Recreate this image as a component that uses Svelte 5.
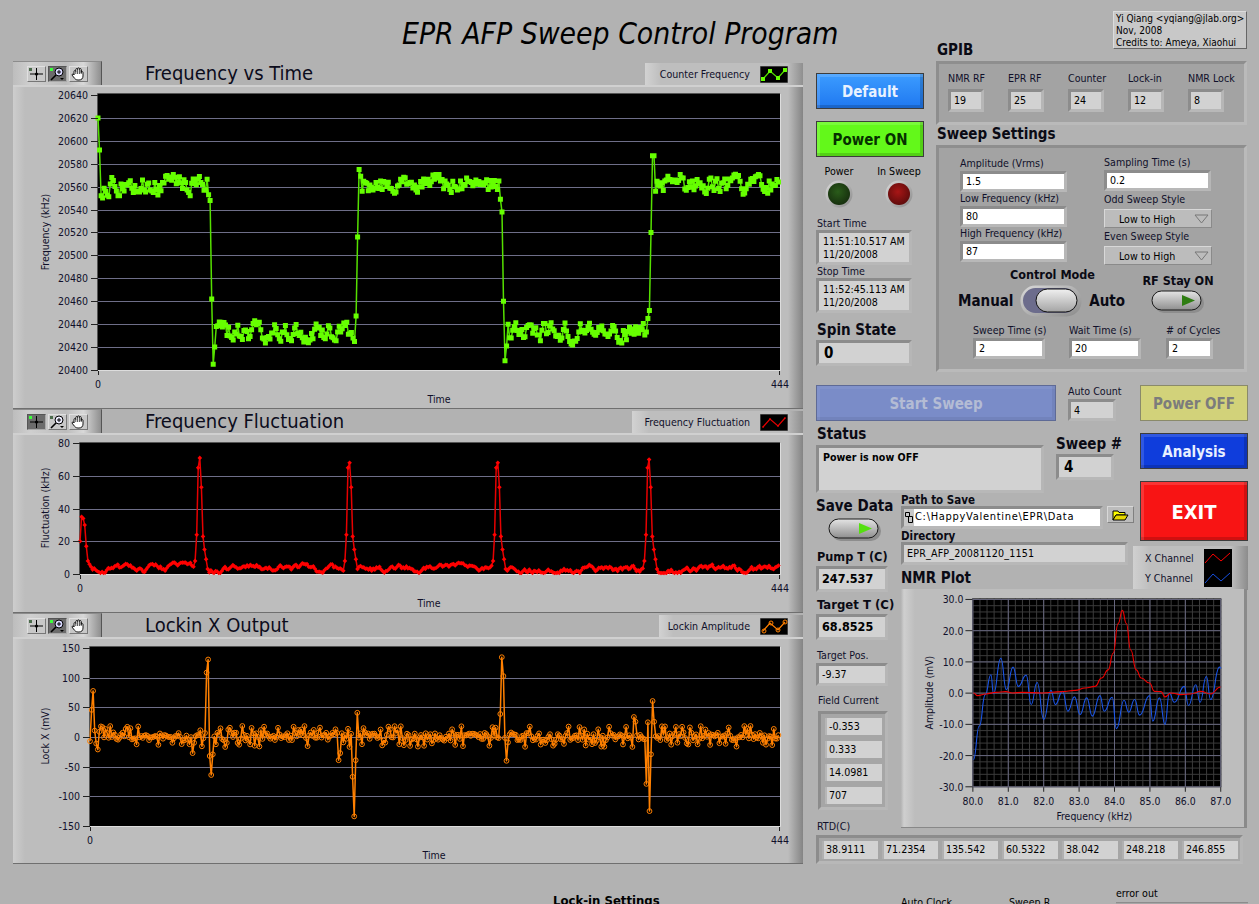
<script>
	// seeded noise so the traces look the same on every load
	let seed = 20081120;
	function rnd() {
		seed = (seed + 0x6d2b79f5) | 0;
		let t = Math.imul(seed ^ (seed >>> 15), 1 | seed);
		t = (t + Math.imul(t ^ (t >>> 7), 61 | t)) ^ t;
		return ((t ^ (t >>> 14)) >>> 0) / 4294967296;
	}

	const N = 444;

	function makeFreq() {
		const over = {
			0: 20620, 1: 20592, 2: 20552, 3: 20550, 72: 20553, 73: 20548, 74: 20462, 75: 20405, 76: 20420, 77: 20438,
			168: 20447, 169: 20516, 170: 20575, 171: 20569, 172: 20556, 262: 20549, 263: 20538, 264: 20460, 265: 20408,
			266: 20421, 267: 20440, 358: 20445, 359: 20452, 360: 20520, 361: 20587, 362: 20587, 363: 20556
		};
		const out = [];
		let walk = 0;
		for (let i = 0; i < N; i++) {
			const high = i < 74 || (i >= 170 && i < 264) || i >= 361;
			walk = walk * 0.5 + (rnd() - 0.5) * 14;
			out.push(over[i] ?? (high ? 20562 : 20434) + walk);
		}
		return out;
	}

	function makeFluct() {
		const peak = [8, 24, 65, 68, 53, 23, 15, 9, 3];
		const over = { 0: 20, 1: 35, 2: 34, 3: 30, 4: 17, 5: 8, 6: 6 };
		[73, 168, 262, 358].forEach((start, n) => {
			peak.forEach((v, k) => (over[start + k] = k === 3 ? v + (n === 0 ? 3 : n === 3 ? 2 : 0) : v));
		});
		const out = [];
		let walk = 3;
		for (let i = 0; i < N; i++) {
			walk = Math.max(0.6, Math.min(7, walk * 0.88 + 0.3 + (rnd() - 0.5) * 3));
			out.push(over[i] ?? walk);
		}
		return out;
	}

	function makeLockin() {
		const over = {
			0: -8, 1: 45, 2: 77, 3: 10, 4: -12, 5: -22, 6: 8, 7: 17, 66: -28, 75: 108, 76: 130, 77: -33, 78: -65, 79: -30,
			160: -40, 161: -28, 169: -68, 170: -135, 171: -40, 172: 40, 264: 38, 265: 134, 266: 102, 268: -41, 269: -10,
			350: 33, 351: 25, 358: -80, 359: 24, 360: -126, 361: -30, 362: 60, 363: 25
		};
		const out = [];
		for (let i = 0; i < N; i++) {
			let v = (rnd() - 0.5) * 14;
			if (rnd() < 0.3) v = (rnd() < 0.55 ? 1 : -1) * (10 + rnd() * 8);
			out.push(over[i] ?? v);
		}
		return out;
	}

	function toXY(values, plot, yOf) {
		return values.map((v, i) => [plot.x + (i * plot.w) / N, yOf(v)]);
	}

	const linePath = (pts) => pts.map((p, i) => (i ? 'L' : 'M') + p[0].toFixed(1) + ' ' + p[1].toFixed(1)).join('');
	const squares = (pts) => pts.map((p) => `M${(p[0] - 2.5).toFixed(1)} ${(p[1] - 2.5).toFixed(1)}h5v5h-5z`).join('');
	const diamonds = (pts) => pts.map((p) => `M${p[0].toFixed(1)} ${(p[1] - 2.3).toFixed(1)}l2.3 2.3l-2.3 2.3l-2.3 -2.3z`).join('');
	const circles = (pts) => pts.map((p) => `M${(p[0] - 2.4).toFixed(1)} ${p[1].toFixed(1)}a2.4 2.4 0 1 0 4.8 0a2.4 2.4 0 1 0 -4.8 0z`).join('');

	const p1 = { x: 98, y: 94, w: 682, h: 276 };
	const p2 = { x: 80, y: 443, w: 700, h: 131 };
	const p3 = { x: 90, y: 647, w: 690, h: 179 };

	const freqPts = toXY(makeFreq(), p1, (v) => 370 - (v - 20400) * 1.146);
	const fluctPts = toXY(makeFluct(), p2, (v) => 574 - v * 1.635);
	const lockPts = toXY(makeLockin(), p3, (v) => 736.5 - v * 0.592);

	const charts = [
		{
			title: 'Frequency vs Time', legend: 'Counter Frequency', kind: 'c1', active: 1, first: true, vb: '13 85 790 323', plot: p1,
			yLabel: 'Frequency (kHz)', yLabelAt: [49, 232], labelEnd: 88, tickFrom: 91, timeAt: [439, 399], numY: 384,
			ticks: [20640, 20620, 20600, 20580, 20560, 20540, 20520, 20500, 20480, 20460, 20440, 20420, 20400].map((v) => [v, 370 - (v - 20400) * 1.146]),
			grid: [20620, 20600, 20580, 20560, 20540, 20520, 20500, 20480, 20460, 20440, 20420].map((v) => 370 - (v - 20400) * 1.146),
			line: linePath(freqPts), marks: squares(freqPts), lineColor: '#55e000', markColor: '#66ff00', open: false
		},
		{
			title: 'Frequency Fluctuation', legend: 'Frequency Fluctuation', kind: 'c2', active: 0, vb: '13 433 790 179', plot: p2,
			yLabel: 'Fluctuation (kHz)', yLabelAt: [49, 508], labelEnd: 70, tickFrom: 73, timeAt: [429, 603], numY: 588,
			ticks: [80, 60, 40, 20, 0].map((v) => [v, 574 - v * 1.635]),
			grid: [60, 40, 20].map((v) => 574 - v * 1.635),
			line: linePath(fluctPts), marks: diamonds(fluctPts), lineColor: '#e60000', markColor: '#ff0000', open: false
		},
		{
			title: 'Lockin X Output', legend: 'Lockin Amplitude', kind: 'c3', active: 1, vb: '13 637 790 227', plot: p3,
			yLabel: 'Lock X (mV)', yLabelAt: [49, 736], labelEnd: 80, tickFrom: 83, timeAt: [434, 855], numY: 840,
			ticks: [150, 100, 50, 0, -50, -100, -150].map((v) => [v, 737 - v * 0.592]),
			grid: [100, 50, 0, -50, -100].map((v) => 737 - v * 0.592),
			line: linePath(lockPts), marks: circles(lockPts), lineColor: '#ff8000', markColor: '#ff8000', open: true
		}
	];

	// smooth curve through hand-read points of the NMR plot
	function smooth(points) {
		const pts = points.map(([zx, zy]) => [810 + zx / 3, 570 + zy / 3]);
		let d = `M${pts[0][0].toFixed(1)} ${pts[0][1].toFixed(1)}`;
		for (let i = 1; i < pts.length; i++) {
			const mid = ((pts[i - 1][0] + pts[i][0]) / 2).toFixed(1);
			d += `C${mid} ${pts[i - 1][1].toFixed(1)} ${mid} ${pts[i][1].toFixed(1)} ${pts[i][0].toFixed(1)} ${pts[i][1].toFixed(1)}`;
		}
		return d;
	}

	const nmrBlue = smooth([
		[492, 572], [510, 470], [528, 375], [545, 315], [553, 372], [575, 265], [592, 360], [612, 292], [628, 350], [652, 316],
		[667, 405], [685, 338], [705, 450], [727, 362], [740, 405], [762, 365], [778, 425], [798, 382], [815, 435], [835, 385],
		[852, 440], [875, 378], [888, 425], [912, 383], [925, 478], [948, 392], [962, 428], [980, 390], [995, 437], [1025, 378],
		[1035, 455], [1055, 385], [1072, 465], [1085, 370], [1100, 398], [1130, 350], [1143, 408], [1165, 345], [1178, 398],
		[1197, 320], [1210, 390], [1237, 292], [1242, 295]
	]);
	const nmrRed = smooth([
		[492, 370], [505, 378], [530, 373], [560, 368], [590, 366], [610, 370], [640, 368], [700, 370], [760, 366], [800, 362],
		[830, 355], [860, 350], [880, 325], [900, 300], [915, 250], [930, 160], [943, 120], [955, 160], [968, 240], [985, 300],
		[1000, 325], [1025, 340], [1040, 365], [1060, 366], [1072, 382], [1090, 370], [1120, 375], [1150, 373], [1180, 365],
		[1210, 373], [1240, 352]
	]);

	const nmrXs = [80, 81, 82, 83, 84, 85, 86, 87].map((f, i) => [f.toFixed(1), 973.5 + i * 35.72]);
	const nmrYs = [30, 20, 10, 0, -10, -20, -30].map((v, i) => [v.toFixed(1), 599 + i * 31.5]);
	const nmrMinorX = Array.from({ length: 36 }, (_, i) => 973.5 + (i * 35.72) / 5);
	const nmrMinorY = Array.from({ length: 31 }, (_, i) => 599 + (i * 31.5) / 5);

	const gpib = [['NMR RF', 19], ['EPR RF', 25], ['Counter', 24], ['Lock-in', 12], ['NMR Lock', 8]];
	const fieldCurrent = ['-0.353', '0.333', '14.0981', '707'];
	const rtd = ['38.9111', '71.2354', '135.542', '60.5322', '38.042', '248.218', '246.855'];
</script>

{#snippet toolbar(active)}
	<div class="toolbar">
		<div class="tool" class:on={active === 0}>
			<svg width="17" height="14" viewBox="0 0 17 14">
				<rect x="1" y="1" width="3" height="3" fill={active === 0 ? '#3cff3c' : '#4a6a4a'} />
				<path d="M8.5 1v12M2 7h13" stroke="#000" fill="none" />
				<circle cx="8.5" cy="7" r="1.6" fill="#000" />
			</svg>
		</div>
		<div class="tool" class:on={active === 1}>
			<svg width="17" height="14" viewBox="0 0 17 14">
				<rect x="1" y="1" width="3" height="3" fill={active === 1 ? '#3cff3c' : '#4a6a4a'} />
				<circle cx="10" cy="5" r="4" fill={active === 1 ? '#d8d8ff' : '#eef'} stroke="#000" />
				<path d="M8 5h4M10 3v4" stroke="#000" fill="none" />
				<path d="M7 8l-5 5" stroke="#000" stroke-width="1.6" fill="none" />
				<path d="M11 11h4l-2 2z" fill="#000" />
			</svg>
		</div>
		<div class="tool">
			<svg width="17" height="14" viewBox="0 0 17 14">
				<path d="M4 8V4.5a.9.9 0 0 1 1.8 0V2.5a.9.9 0 0 1 1.8 0V1.8a.9.9 0 0 1 1.8 0v.7a.9.9 0 0 1 1.8 0V5.5a.9.9 0 0 1 1.8 0V9c0 2.500-1.500 4-4 4H8C6 13 5 12 3.500 10L2 8a1 1 0 0 1 2 0z" fill="#fff" stroke="#000" stroke-width=".9" />
				<path d="M5.800 4.500V7M7.600 2.500V7M9.400 2.500V7M11.200 3V7" stroke="#000" stroke-width=".7" fill="none" />
			</svg>
		</div>
	</div>
{/snippet}

{#snippet chart(c)}
	<section class="chart {c.kind}">
		<header class="chart-head" class:first={c.first}>
			{@render toolbar(c.active)}
			<h2 class="chart-title">{c.title}</h2>
			<div class="legend {c.kind}-legend">
				<span>{c.legend}</span>
				<svg class="swatch" width="28" height="17" viewBox="0 0 28 17">
					<rect width="28" height="17" fill="#000" stroke="#777" />
					<path d="M3 13L10 5L18 12L25 4" stroke={c.lineColor} stroke-width="1.200" fill="none" />
					{#if c.kind === 'c1'}
						<path d="M1 11h4v4h-4zM8 3h4v4h-4zM16 10h4v4h-4zM23 2h4v4h-4z" fill={c.markColor} />
					{:else if c.kind === 'c2'}
						<path d="M3 12l1 1l-1 1l-1 -1zM10 4l1 1l-1 1l-1 -1zM18 11l1 1l-1 1l-1 -1zM25 3l1 1l-1 1l-1 -1z" fill={c.markColor} />
					{:else}
						<g fill="none" stroke={c.markColor}><circle cx="4" cy="13" r="2" /><circle cx="11" cy="5" r="2" /><circle cx="18" cy="12" r="2" /><circle cx="25" cy="4" r="2" /></g>
					{/if}
				</svg>
			</div>
		</header>
		<div class="chart-body">
			<svg class="plot" viewBox={c.vb}>
				<rect x={c.plot.x} y={c.plot.y} width={c.plot.w} height={c.plot.h} fill="#000" />
				<path d="M{c.plot.x - 0.5} {c.plot.y + c.plot.h}V{c.plot.y - 0.5}H{c.plot.x + c.plot.w}" fill="none" stroke="#555" />
				<path d="M{c.plot.x} {c.plot.y + c.plot.h + 0.5}H{c.plot.x + c.plot.w + 0.5}V{c.plot.y}" fill="none" stroke="#ddd" />
				{#each c.grid as y}
					<line x1={c.plot.x} x2={c.plot.x + c.plot.w} y1={Math.round(y) + 0.5} y2={Math.round(y) + 0.5} stroke="#6e6e88" />
				{/each}
				<path d={c.line} fill="none" stroke={c.lineColor} stroke-width="1.500" stroke-linejoin="round" />
				<path d={c.marks} fill={c.open ? 'none' : c.markColor} stroke={c.open ? c.markColor : 'none'} stroke-width="1" />
				{#each c.ticks as [value, y]}
					<line x1={c.tickFrom} x2={c.plot.x} y1={Math.round(y) + 0.5} y2={Math.round(y) + 0.5} stroke="#222" />
					<text class="tk" x={c.labelEnd} y={y + 4} text-anchor="end">{value}</text>
				{/each}
				<line x1={c.plot.x + 0.5} x2={c.plot.x + 0.5} y1={c.plot.y + c.plot.h + 1} y2={c.plot.y + c.plot.h + 5} stroke="#222" />
				<line x1={c.plot.x + c.plot.w - 0.5} x2={c.plot.x + c.plot.w - 0.5} y1={c.plot.y + c.plot.h + 1} y2={c.plot.y + c.plot.h + 5} stroke="#222" />
				<text class="tk" x={c.plot.x} y={c.numY + 4} text-anchor="middle">0</text>
				<text class="tk" x={c.plot.x + c.plot.w} y={c.numY + 4} text-anchor="middle">444</text>
				<text class="tk" x={c.timeAt[0]} y={c.timeAt[1] + 4} text-anchor="middle">Time</text>
				<text class="tk axis-y" text-anchor="middle" transform="translate({c.yLabelAt[0]} {c.yLabelAt[1]}) rotate(-90)">{c.yLabel}</text>
			</svg>
		</div>
	</section>
{/snippet}

{#snippet pill(color)}
	<svg width="54" height="24" viewBox="0 0 54 24">
		<rect x="3" y="3" width="50" height="20" rx="10" fill="#8d8d8d" />
		<rect x="1" y="1" width="49" height="19" rx="9.500" fill="url(#pillFill)" stroke="#1a1a1a" />
		<path d="M31 5l13 5.500l-13 5.500z" fill={color} />
	</svg>
{/snippet}

<div class="page">
	<svg class="defs" width="0" height="0">
		<defs>
			<linearGradient id="pillFill" x1="0" y1="0" x2="0" y2="1">
				<stop offset="0" stop-color="#e4e4e4" />
				<stop offset="1" stop-color="#8f8f8f" />
			</linearGradient>
			<linearGradient id="knobFill" x1="0" y1="0" x2="0" y2="1">
				<stop offset="0" stop-color="#f0f0f0" />
				<stop offset="1" stop-color="#a4a4a4" />
			</linearGradient>
			<radialGradient id="ledGreen" cx=".45" cy=".4" r=".6">
				<stop offset="0" stop-color="#2a5c1a" />
				<stop offset="1" stop-color="#17300e" />
			</radialGradient>
			<radialGradient id="ledRed" cx=".45" cy=".4" r=".6">
				<stop offset="0" stop-color="#a81616" />
				<stop offset="1" stop-color="#600c0c" />
			</radialGradient>
			<linearGradient id="ledRing" x1="0" y1="0" x2="1" y2="1">
				<stop offset="0" stop-color="#dadada" />
				<stop offset="1" stop-color="#8a8a8a" />
			</linearGradient>
		</defs>
	</svg>

	<div class="left">
		<h1 class="title">EPR AFP Sweep Control Program</h1>
		{#each charts as c}
			{@render chart(c)}
		{/each}
		<div class="lockin-head">Lock-in Settings</div>
	</div>

	<div class="right">
		<div class="upper">
			<div class="col-a">
				<button class="btn blue">Default</button>
				<button class="btn green">Power ON</button>
				<div class="leds">
					<div class="led-item">
						<span>Power</span>
						<svg width="28" height="28" viewBox="0 0 28 28"><circle cx="14" cy="14" r="13.500" fill="url(#ledRing)" /><circle cx="14" cy="14" r="11" fill="url(#ledGreen)" /></svg>
					</div>
					<div class="led-item">
						<span>In Sweep</span>
						<svg width="28" height="28" viewBox="0 0 28 28"><circle cx="14" cy="14" r="13.500" fill="url(#ledRing)" /><circle cx="14" cy="14" r="11" fill="url(#ledRed)" /></svg>
					</div>
				</div>
				<div class="lbl start-lbl">Start Time</div>
				<div class="well time"><div>11:51:10.517 AM</div><div>11/20/2008</div></div>
				<div class="lbl stop-lbl">Stop Time</div>
				<div class="well time"><div>11:52:45.113 AM</div><div>11/20/2008</div></div>
				<h3 class="bold spin-lbl">Spin State</h3>
				<div class="well big spin">0</div>
			</div>

			<div class="col-b">
				<div class="gpib-top">
					<h3 class="bold gpib-h">GPIB</h3>
					<div class="credits">
						<div>Yi Qiang &lt;yqiang@jlab.org&gt;</div>
						<div>Nov, 2008</div>
						<div>Credits to: Ameya, Xiaohui</div>
					</div>
				</div>
				<div class="frame gpib">
					{#each gpib as [name, addr]}
						<div>
							<div class="lbl">{name}</div>
							<div class="well addr">{addr}</div>
						</div>
					{/each}
				</div>
				<h3 class="bold sweep-h">Sweep Settings</h3>
				<div class="frame sweep">
					<div class="sweep-cols">
						<div class="sweep-left">
							<div class="lbl">Amplitude (Vrms)</div>
							<div class="well input wide">1.5</div>
							<div class="lbl gap-a">Low Frequency (kHz)</div>
							<div class="well input wide">80</div>
							<div class="lbl gap-d">High Frequency (kHz)</div>
							<div class="well input wide">87</div>
						</div>
						<div class="sweep-right">
							<div class="lbl">Sampling Time (s)</div>
							<div class="well input wide">0.2</div>
							<div class="lbl gap-b">Odd Sweep Style</div>
							<div class="drop">Low to High<svg width="15" height="10" viewBox="0 0 15 10"><path d="M1 1h13L7.500 9z" fill="none" stroke="#777" /></svg></div>
							<div class="lbl gap-b">Even Sweep Style</div>
							<div class="drop">Low to High<svg width="15" height="10" viewBox="0 0 15 10"><path d="M1 1h13L7.500 9z" fill="none" stroke="#777" /></svg></div>
						</div>
					</div>
					<div class="mode-row">
						<div class="mode">
							<div class="bold small center">Control Mode</div>
							<div class="mode-line">
								<span class="bold">Manual</span>
								<svg width="62" height="32" viewBox="0 0 62 32">
									<rect x=".5" y=".5" width="61" height="31" rx="15" fill="url(#ledRing)" />
									<rect x="3" y="3" width="54" height="25" rx="12.500" fill="#6c6c8c" />
									<rect x="16" y="4" width="41" height="23" rx="11.500" fill="url(#knobFill)" stroke="#111" />
								</svg>
								<span class="bold">Auto</span>
							</div>
						</div>
						<div class="rf">
							<div class="bold small">RF Stay ON</div>
							{@render pill('#2e7d12')}
						</div>
					</div>
					<div class="sweep-bottom">
						<div class="sb1"><div class="lbl">Sweep Time (s)</div><div class="well input">2</div></div>
						<div class="sb2"><div class="lbl">Wait Time (s)</div><div class="well input">20</div></div>
						<div class="sb3"><div class="lbl"># of Cycles</div><div class="well input">2</div></div>
					</div>
				</div>
			</div>
		</div>

		<div class="lower">
			<div class="area-top">
				<div class="top-row">
					<button class="btn start">Start Sweep</button>
					<div class="auto">
						<div class="lbl">Auto Count</div>
						<div class="well auto-w">4</div>
					</div>
				</div>
				<div class="status-row">
					<div class="status">
						<h3 class="bold">Status</h3>
						<div class="well status-w">Power is now OFF</div>
					</div>
					<div class="sweep-n">
						<h3 class="bold">Sweep #</h3>
						<div class="well big sweep-w">4</div>
					</div>
				</div>
			</div>

			<div class="area-side">
				<button class="btn yellow">Power OFF</button>
				<button class="btn navy">Analysis</button>
				<button class="btn red">EXIT</button>
				<div class="channels">
					<div class="ch-names"><span>X Channel</span><span>Y Channel</span></div>
					<svg width="28" height="38" viewBox="0 0 28 38">
						<rect width="28" height="38" fill="#000" />
						<path d="M1 14L9 5L17 12L26 4" stroke="#f00" fill="none" />
						<path d="M1 34L9 25L17 32L26 24" stroke="#1650e0" fill="none" />
					</svg>
				</div>
			</div>

			<div class="area-left">
				<h3 class="bold save-h">Save Data</h3>
				<div class="save-pill">{@render pill('#55e010')}</div>
				<h3 class="bold pump-h">Pump T (C)</h3>
				<div class="well temp">247.537</div>
				<h3 class="bold target-h">Target T (C)</h3>
				<div class="well temp">68.8525</div>
				<div class="lbl pos-l">Target Pos.</div>
				<div class="well pos">-9.37</div>
				<div class="lbl field-l">Field Current</div>
				<div class="well-group field">
					{#each fieldCurrent as v}
						<div class="cell">{v}</div>
					{/each}
				</div>
				<div class="lbl rtd-l">RTD(C)</div>
			</div>

			<div class="area-mid">
				<div class="bold tiny">Path to Save</div>
				<div class="path-row">
					<div class="well path">
						<svg width="10" height="13" viewBox="0 0 10 13"><path d="M1.500 1.500h4v4h-4zM4.500 5.500h4v6h-4z" fill="none" stroke="#000" /></svg>
						<span>C:\HappyValentine\EPR\Data</span>
					</div>
					<div class="folder">
						<svg width="17" height="12" viewBox="0 0 17 12"><path d="M1 2h5l1 1.500h6V6H4L1 11z" fill="#ff0" stroke="#000" /><path d="M1 11l3 -5h12l-3 5z" fill="#e6d800" stroke="#000" /></svg>
					</div>
				</div>
				<div class="bold tiny dir-l">Directory</div>
				<div class="well dir">EPR_AFP_20081120_1151</div>
				<h3 class="bold nmr-h">NMR Plot</h3>
			</div>

			<div class="area-nmr">
				<svg class="plot" viewBox="901 589 346 239">
					<rect x="973" y="598" width="251" height="190" fill="#000" />
					{#each nmrMinorX as x}
						<line x1={x} x2={x} y1="598" y2="788" stroke="#3c3c3c" />
					{/each}
					{#each nmrMinorY as y}
						<line x1="973" x2="1224" y1={y} y2={y} stroke="#3c3c3c" />
					{/each}
					{#each nmrXs as [name, x]}
						<line x1={x} x2={x} y1="598" y2="788" stroke="#66667e" />
						<line x1={x} x2={x} y1="788" y2="793" stroke="#222" />
						<text class="tk" x={x} y="806" text-anchor="middle">{name}</text>
					{/each}
					{#each nmrYs as [name, y]}
						<line x1="973" x2="1224" y1={y} y2={y} stroke="#66667e" />
						<line x1="966" x2="973" y1={y} y2={y} stroke="#222" />
						<text class="tk" x="964" y={y + 4} text-anchor="end">{name}</text>
					{/each}
					<path d={nmrBlue} fill="none" stroke="#1a55e8" stroke-width="1.100" />
					<path d={nmrRed} fill="none" stroke="#f00000" stroke-width="1.100" />
					<text class="tk" x="1096" y="821" text-anchor="middle">Frequency (kHz)</text>
					<text class="tk axis-y" text-anchor="middle" transform="translate(933 693) rotate(-90)">Amplitude (mV)</text>
				</svg>
			</div>
		</div>

		<div class="well-group rtd">
			{#each rtd as v}
				<div class="cell">{v}</div>
			{/each}
		</div>

		<div class="foot">
			<span class="foot-a">Auto Clock</span>
			<span class="foot-b">Sweep R</span>
			<div class="foot-c">
				<span>error out</span>
				<div class="err-box"></div>
			</div>
		</div>
	</div>
</div>

<style>
	:global(body) {
		margin: 0;
		background: #b2b2b2;
	}

	* {
		box-sizing: border-box;
	}

	.page {
		display: flex;
		width: 1259px;
		height: 904px;
		overflow: hidden;
		background: #b2b2b2;
		color: #000;
		font-family: "DejaVu Sans", "Liberation Sans", sans-serif;
		font-stretch: condensed;
		font-size: 10.600px;
		line-height: 12px;
	}

	.defs {
		position: absolute;
	}

	.left {
		width: 790px;
		margin: 0 13px;
		flex: none;
	}

	.title {
		height: 61px;
		margin: 0;
		padding: 15px 0 0 389px;
		font-size: 29.800px;
		line-height: 38px;
		font-weight: 400;
		font-style: italic;
		white-space: nowrap;
		color: #000;
	}

	.chart-head {
		display: flex;
		height: 25px;
		border-top: 1px solid #6f6f6f;
	}

	.chart-head.first {
		height: 24px;
		border-top: 0;
	}

	.toolbar {
		display: flex;
		gap: 2px;
		align-items: center;
		width: 89px;
		padding-left: 14px;
		border-top: 1px solid #8c8c8c;
		border-right: 1px solid #555;
		background: linear-gradient(90deg, #bdbdbd, #cfcfcf 20%, #bcbcbc 60%, #d8d8d8 80%, #8f8f8f);
	}

	.tool {
		display: flex;
		align-items: center;
		justify-content: center;
		width: 19px;
		height: 16px;
		border: 1px solid #888;
		border-color: #e0e0e0 #777 #777 #e0e0e0;
		background: #c8c8c8;
	}

	.tool.on {
		background: #6c6c6c;
		border-color: #555 #aaa #aaa #555;
	}

	.chart-title {
		margin: 0 0 0 43px;
		font-size: 20px;
		line-height: 24px;
		font-weight: 400;
		color: #0c0c1c;
		white-space: nowrap;
	}

	.legend {
		display: flex;
		align-items: center;
		justify-content: flex-end;
		margin-left: auto;
		margin-top: 2px;
		padding-right: 15px;
		height: 22px;
		background: linear-gradient(90deg, #d2d2d2, #bebebe 10%, #bebebe 90%, #8f8f8f);
		color: #10102a;
		gap: 10px;
	}

	.c1-legend {
		width: 158px;
	}

	.c2-legend {
		width: 171px;
	}

	.c3-legend {
		width: 144px;
	}

	.chart-body {
		border-top: 2px solid #d0d0d0;
		background: linear-gradient(90deg, #cdcdcd 0, #bdbdbd 12px, #bdbdbd 775px, #848484 790px);
	}

	.c1 .chart-body {
		height: 323px;
	}

	.c2 .chart-body {
		height: 179px;
	}

	.c3 .chart-body {
		height: 227px;
		box-shadow: inset 0 -1px #6f6f6f;
	}

	.plot {
		display: block;
		width: 100%;
		height: 100%;
		overflow: visible;
	}

	.chart-body .plot {
		height: calc(100% + 2px);
		margin-top: -2px;
	}

	.tk {
		font-size: 10.500px;
		fill: #10102a;
	}

	.lockin-head {
		margin-top: 30px;
		padding-left: 540px;
		font-weight: 700;
		font-size: 13px;
		line-height: 14px;
	}

	.right {
		width: 443px;
		flex: none;
	}

	.upper {
		display: flex;
		height: 372px;
	}

	.col-a {
		width: 120px;
		padding-top: 73px;
	}

	.col-b {
		width: 311px;
	}

	.btn {
		display: block;
		width: 108px;
		height: 36px;
		padding: 2px 0 0;
		border: 1px solid #3c3c3c;
		font: inherit;
		font-size: 15px;
		font-weight: 700;
		font-stretch: condensed;
		text-align: center;
		box-shadow: inset 3px 3px 0 rgba(255, 255, 255, 0.14), inset -3px -3px 0 rgba(0, 0, 0, 0.16);
	}

	.blue {
		background: linear-gradient(#3c9cff, #1f78f0);
		color: #e8f2ff;
	}

	.green {
		margin-top: 12px;
		background: #63f81a;
		color: #063000;
	}

	.yellow {
		border-color: #8a8a6a;
		background: #d2d27a;
		color: #7c7c7c;
		box-shadow: none;
	}

	.navy {
		margin-top: 12px;
		background: #0f3ddc;
		color: #e8f0ff;
	}

	.red {
		margin-top: 12px;
		height: 60px;
		background: #f81414;
		color: #fff;
		font-size: 20px;
	}

	.start {
		width: 240px;
		border-color: #5e6a96;
		background: #7a8cc8;
		color: #b4bcd4;
		box-shadow: inset 3px 3px 0 rgba(255, 255, 255, 0.06), inset -3px -3px 0 rgba(0, 0, 0, 0.06);
	}

	.lbl {
		white-space: nowrap;
		color: #10102a;
	}

	.bold {
		margin: 0;
		font-size: 15px;
		line-height: 16px;
		font-weight: 700;
		white-space: nowrap;
		color: #0a0a14;
	}

	.bold.small {
		font-size: 12.500px;
		line-height: 14px;
	}

	.bold.tiny {
		font-size: 11.500px;
		line-height: 12px;
	}

	.center {
		padding-left: 22px;
		text-align: center;
	}

	.well {
		border: 3px solid;
		border-color: #8c8c8c #b6b6b6 #b8b8b8 #8c8c8c;
		background: #d2d2d2;
		padding: 0 3px;
		white-space: nowrap;
		line-height: 15px;
	}

	.well.input {
		background: #fff;
		height: 21px;
		padding-left: 3px;
	}

	.well.big {
		font-size: 15px;
		font-weight: 700;
		height: 26px;
		line-height: 20px;
		padding-left: 5px;
	}

	.leds {
		display: flex;
		width: 106px;
		margin-top: 8px;
		justify-content: space-between;
	}

	.led-item {
		display: flex;
		flex-direction: column;
		align-items: center;
		width: 46px;
		gap: 3px;
	}

	.start-lbl {
		margin-top: 9px;
		padding-left: 1px;
	}

	.stop-lbl {
		padding-left: 1px;
	}

	.time {
		width: 96px;
		height: 35px;
		margin-top: 1px;
		padding: 2px 0 0 4px;
		line-height: 13px;
	}

	.spin-lbl {
		margin-top: 9px;
		padding-left: 1px;
	}

	.spin {
		width: 96px;
		margin-top: 2px;
	}

	.gpib-top {
		display: flex;
		justify-content: space-between;
		align-items: flex-start;
		height: 61px;
	}

	.gpib-h {
		margin-top: 42px;
		padding-left: 1px;
	}

	.credits {
		width: 134px;
		height: 38px;
		margin-top: 11px;
		padding: 1px 0 0 2px;
		background: #c8c8c8;
		border-top: 1px solid #dcdcdc;
		border-left: 1px solid #dcdcdc;
		border-right: 1px solid #666;
		border-bottom: 1px solid #666;
		font-size: 10px;
		white-space: nowrap;
	}

	.frame {
		border: 3px solid;
		border-color: #8e8e8e #bababa #bababa #8e8e8e;
		background: #a3a3a3;
	}

	.gpib {
		display: grid;
		grid-template-columns: repeat(5, 60px);
		height: 64px;
		padding: 8px 0 0 9px;
	}

	.addr {
		width: 36px;
		height: 23px;
		margin-top: 5px;
		line-height: 17px;
	}

	.sweep-h {
		height: 20px;
		padding: 1px 0 0 1px;
	}

	.sweep {
		height: 227px;
	}

	.sweep-cols {
		display: flex;
		height: 117px;
	}

	.sweep-left {
		width: 144px;
		margin-left: 21px;
		padding-top: 9px;
	}

	.sweep-right {
		padding-top: 8px;
	}

	.wide {
		width: 107px;
		margin-top: 2px;
	}

	.gap-a {
		margin-bottom: 1px;
	}

	.gap-d {
		margin-top: 0;
	}

	.gap-b {
		margin-top: 2px;
		margin-bottom: 4px;
	}

	.drop {
		display: flex;
		align-items: center;
		justify-content: space-between;
		width: 108px;
		height: 19px;
		padding: 0 2px 0 14px;
		border: 1px solid;
		border-color: #d8d8d8 #8a8a8a #8a8a8a #d8d8d8;
		background: #bcbcbc;
		line-height: 16px;
		white-space: nowrap;
	}

	.mode-row {
		display: flex;
		height: 56px;
		margin-top: 3px;
		padding-left: 19px;
	}

	.mode {
		width: 167px;
	}

	.mode-line {
		display: flex;
		align-items: center;
		justify-content: space-between;
		margin-top: 3px;
	}

	.rf {
		display: flex;
		flex-direction: column;
		align-items: center;
		width: 68px;
		margin: 6px 0 0 19px;
		gap: 2px;
	}

	.sweep-bottom {
		display: flex;
	}

	.sb1 {
		width: 96px;
		margin-left: 34px;
	}

	.sb1 .well {
		width: 72px;
		margin-top: 2px;
	}

	.sb2 {
		width: 97px;
	}

	.sb2 .well {
		width: 72px;
		margin-top: 2px;
	}

	.sb3 .well {
		width: 47px;
		margin-top: 2px;
	}

	.lower {
		display: grid;
		grid-template-columns: 85px 233px 114px;
		grid-template-rows: 108px 96px 246px;
		grid-template-areas:
			"top top side"
			"lft mid side"
			"lft nmr nmr";
		margin-top: 13px;
	}

	.area-top {
		grid-area: top;
	}

	.area-side {
		grid-area: side;
		padding-left: 6px;
	}

	.area-left {
		grid-area: lft;
	}

	.area-mid {
		grid-area: mid;
		padding-top: 1px;
	}

	.area-nmr {
		grid-area: nmr;
		height: 239px;
		width: 346px;
		border-right: 3px solid #8a8a8a;
		border-bottom: 1px solid #888;
		background: linear-gradient(90deg, #b4b4b4 0, #cfcfcf 3px, #bdbdbd 14px);
	}

	.area-nmr .plot {
		width: 343px;
		height: 238px;
	}

	.top-row {
		display: flex;
		height: 36px;
	}

	.auto {
		margin-left: 12px;
	}

	.auto-w {
		width: 48px;
		height: 22px;
		margin-top: 2px;
		line-height: 16px;
	}

	.status-row {
		display: flex;
	}

	.status {
		width: 240px;
		padding-top: 5px;
	}

	.status h3 {
		padding-left: 1px;
	}

	.status-w {
		width: 228px;
		height: 48px;
		margin-top: 3px;
		padding: 2px 0 0 4px;
		font-weight: 700;
	}

	.sweep-n {
		padding-top: 15px;
	}

	.sweep-w {
		width: 58px;
		margin-top: 2px;
	}

	.channels {
		display: flex;
		align-items: center;
		justify-content: space-between;
		width: 115px;
		height: 44px;
		margin: 5px 0 0 -7px;
		padding: 0 16px 0 12px;
		background: linear-gradient(90deg, #d0d0d0, #bebebe 15%, #bebebe 85%, #8c8c8c);
	}

	.ch-names {
		display: flex;
		flex-direction: column;
		gap: 8px;
		color: #10102a;
	}

	.save-h {
		margin-top: 5px;
	}

	.save-pill {
		margin: 4px 0 0 12px;
		height: 24px;
	}

	.pump-h {
		margin-top: 7px;
		padding-left: 1px;
		font-size: 12.600px;
	}

	.temp {
		width: 72px;
		height: 26px;
		margin-top: 1px;
		font-size: 12.500px;
		font-weight: 700;
		line-height: 20px;
	}

	.target-h {
		margin-top: 5px;
		padding-left: 1px;
		font-size: 13px;
	}

	.pos-l {
		margin-top: 9px;
		padding-left: 1px;
	}

	.pos {
		width: 72px;
		height: 23px;
		margin-top: 2px;
		line-height: 17px;
	}

	.field-l {
		margin-top: 8px;
		padding-left: 2px;
	}

	.well-group {
		border: 3px solid;
		border-color: #8c8c8c #b6b6b6 #b8b8b8 #8c8c8c;
		background: #a6a6a6;
	}

	.field {
		display: flex;
		flex-direction: column;
		gap: 6px;
		width: 70px;
		height: 99px;
		margin: 5px 0 0 2px;
		padding: 4px 0 0 4px;
	}

	.cell {
		height: 17px;
		padding-left: 2px;
		background: #d2d2d2;
		line-height: 16px;
		white-space: nowrap;
	}

	.field .cell {
		width: 57px;
		border-left: 2px solid #b6b6b6;
	}

	.rtd-l {
		margin-top: 10px;
		padding-left: 1px;
	}

	.path-row {
		display: flex;
		gap: 4px;
		align-items: flex-start;
	}

	.path {
		display: flex;
		align-items: center;
		width: 202px;
		height: 23px;
		padding: 0;
		background: #c8c8c8;
	}

	.path svg {
		flex: none;
	}

	.path span {
		flex: 1;
		height: 100%;
		background: #fff;
		padding-left: 1px;
		font-size: 11px;
		letter-spacing: 0.7px;
		line-height: 16px;
	}

	.folder {
		display: flex;
		align-items: center;
		justify-content: center;
		width: 27px;
		height: 17px;
		border: 1px solid;
		border-color: #d8d8d8 #808080 #808080 #d8d8d8;
		background: #bcbcbc;
	}

	.dir-l {
		margin-top: 1px;
	}

	.dir {
		width: 227px;
		height: 23px;
		letter-spacing: 0.2px;
		line-height: 17px;
	}

	.nmr-h {
		margin-top: 5px;
	}

	.rtd {
		display: flex;
		gap: 4px;
		width: 427px;
		height: 29px;
		padding: 3px 0 0 3px;
	}

	.rtd .cell {
		width: 56px;
		height: 18px;
		line-height: 17px;
		padding-left: 2px;
		border-left: 2px solid #b0b0b0;
	}

	.foot {
		display: flex;
		height: 40px;
	}

	.foot-a {
		margin: 32px 0 0 85px;
		width: 108px;
	}

	.foot-b {
		margin-top: 32px;
		width: 107px;
	}

	.foot-c {
		flex: 1;
		padding-top: 23px;
	}

	.err-box {
		height: 20px;
		margin-top: 3px;
		width: 132px;
		background: #a6a6a6;
		border-top: 1px solid #8c8c8c;
	}
</style>
